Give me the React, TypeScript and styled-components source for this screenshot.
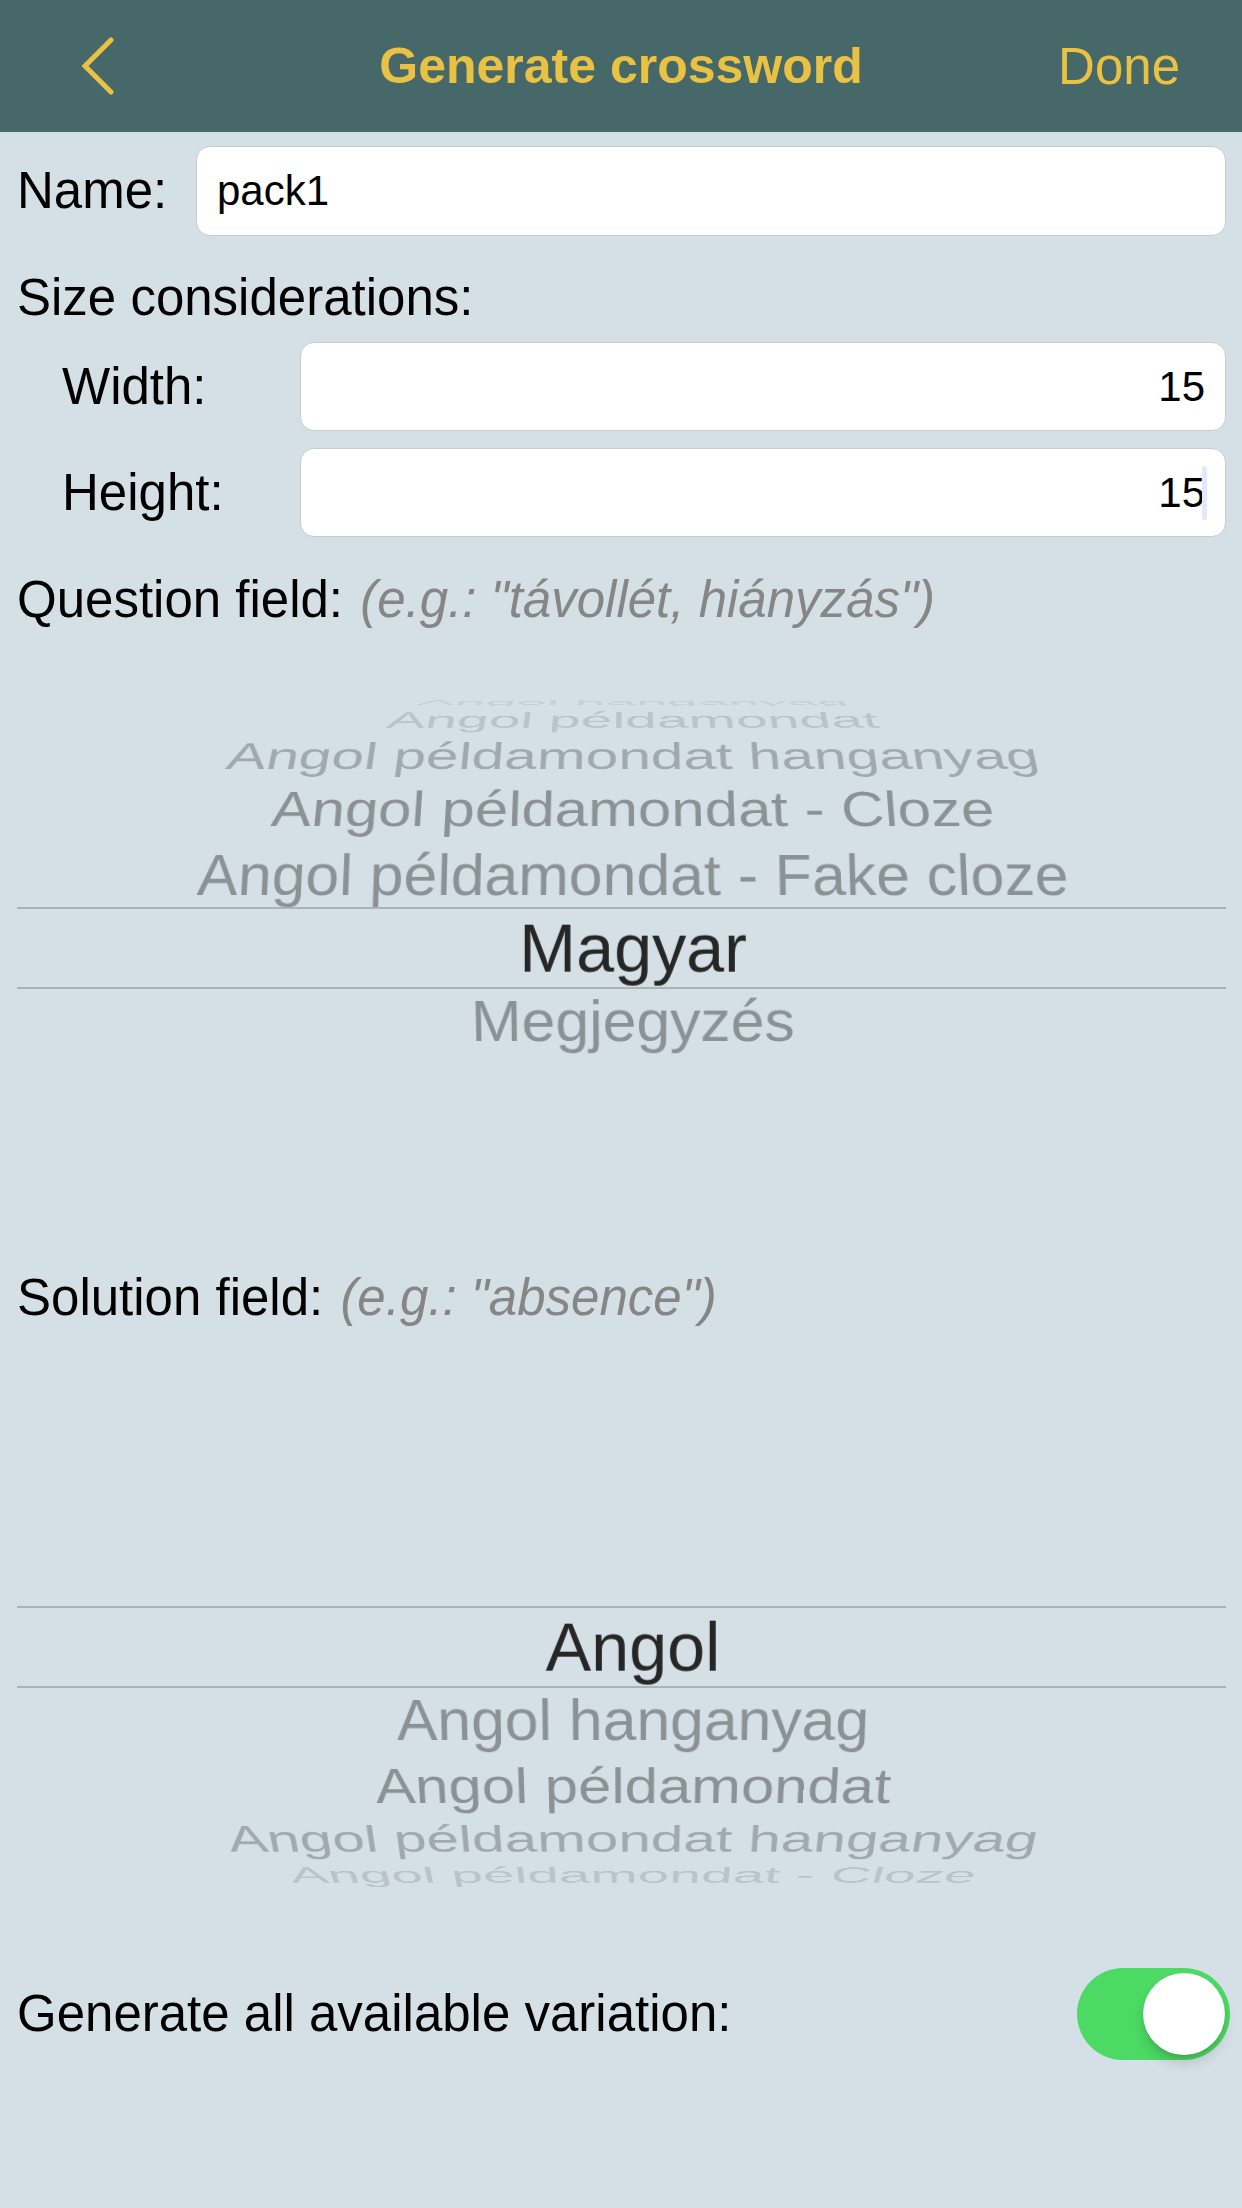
import React from "react";
import styled, { createGlobalStyle } from "styled-components";

const FONT = `"Liberation Sans", Arial, Helvetica, sans-serif`;

const GlobalStyle = createGlobalStyle`
  *, *::before, *::after { box-sizing: border-box; }
  html, body { margin: 0; padding: 0; background: #d5e0e6; }
  body { font-family: ${FONT}; }
`;

const Screen = styled.div`
  width: 1242px;
  height: 2208px;
  overflow: hidden;
  background: #d5e0e6;
  display: flex;
  flex-direction: column;
  font-family: ${FONT};
  color: #000;
`;

const NavBar = styled.header`
  flex: 0 0 132px;
  height: 132px;
  background: #466868;
  display: grid;
  grid-template-columns: 1fr auto 1fr;
  align-items: center;
  padding: 0 62px;
  color: #e9c244;
`;

const BackButton = styled.button`
  justify-self: start;
  display: flex;
  align-items: center;
  background: none;
  border: 0;
  padding: 0;
  margin: 0 0 0 18px;
  color: inherit;
  cursor: pointer;
`;

const NavTitle = styled.h1`
  margin: 0;
  font-size: 50px;
  font-weight: 700;
  color: inherit;
  white-space: nowrap;
`;

const NavAction = styled.button`
  justify-self: end;
  background: none;
  border: 0;
  padding: 0;
  font-family: inherit;
  font-size: 51px;
  color: inherit;
  cursor: pointer;
`;

const Form = styled.main`
  display: flex;
  flex-direction: column;
  padding: 0 16px 0 17px;
`;

const FieldRow = styled.div<{ $top: number; $indent?: number }>`
  display: flex;
  align-items: center;
  margin-top: ${(p) => p.$top}px;
  padding-left: ${(p) => p.$indent ?? 0}px;
`;

const FieldLabel = styled.label<{ $width: number }>`
  flex: 0 0 ${(p) => p.$width}px;
  font-size: 51px;
  line-height: 60px;
  white-space: nowrap;
`;

const TextBox = styled.div<{ $align: "left" | "right"; $height: number; $padRight?: number }>`
  flex: 1;
  height: ${(p) => p.$height}px;
  background: #fff;
  border: 1.5px solid #c6cdd2;
  border-radius: 14px;
  display: flex;
  align-items: center;
  justify-content: ${(p) => (p.$align === "right" ? "flex-end" : "flex-start")};
  padding: 0 ${(p) => p.$padRight ?? 20}px 0 20px;
  font-size: 42px;
  color: #000;
`;

const Caret = styled.span`
  display: inline-block;
  width: 5px;
  height: 54px;
  border-radius: 3px;
  background: #e3e8fb;
  margin-left: -3px;
`;

const SectionLabel = styled.div<{ $top: number }>`
  margin-top: ${(p) => p.$top}px;
  height: 60px;
  font-size: 51px;
  line-height: 60px;
  white-space: nowrap;
`;

const Hint = styled.span`
  font-style: italic;
  color: #868686;
  margin-left: 3px;
`;

const PickerFrame = styled.div<{ $top: number; $height: number }>`
  position: relative;
  margin-top: ${(p) => p.$top}px;
  height: ${(p) => p.$height}px;
  overflow: hidden;
`;

const GreyLayer = styled.div`
  position: absolute;
  left: 0;
  right: 0;
  top: 0;
  height: 620px;
  -webkit-mask-image: linear-gradient(to bottom, #000 0, #000 270px, transparent 270px, transparent 350px, #000 350px);
  mask-image: linear-gradient(to bottom, #000 0, #000 270px, transparent 270px, transparent 350px, #000 350px);
`;

const FocusLayer = styled.div`
  position: absolute;
  left: 0;
  right: 0;
  top: 0;
  height: 620px;
  clip-path: inset(271px 0 271px 0);
`;

const Magnifier = styled.div`
  position: absolute;
  left: 23px;
  right: 0;
  top: 0;
  bottom: 0;
  transform: scale(1.12);
  transform-origin: 50% 310px;
`;

const Drum = styled.div<{ $inset: number }>`
  position: absolute;
  left: ${(p) => p.$inset}px;
  right: 0;
  top: 0;
  bottom: 0;
  perspective: 2000px;
  perspective-origin: 50% 310px;
`;

const DrumRow = styled.div<{ $focus?: boolean }>`
  position: absolute;
  left: 0;
  right: 0;
  top: 274px;
  height: 72px;
  line-height: 72px;
  text-align: center;
  white-space: nowrap;
  font-size: 61px;
  color: ${(p) => (p.$focus ? "#262626" : "#8a9296")};
  backface-visibility: hidden;
`;

const SelectionBand = styled.div`
  position: absolute;
  left: 0;
  right: 0;
  top: 269px;
  height: 82px;
  border-top: 2px solid #a9b3b8;
  border-bottom: 2px solid #a9b3b8;
  pointer-events: none;
`;

const ToggleRow = styled.div<{ $top: number }>`
  display: flex;
  align-items: center;
  justify-content: space-between;
  margin-top: ${(p) => p.$top}px;
  margin-right: -4px;
`;

const ToggleLabel = styled.span`
  font-size: 51px;
  line-height: 60px;
`;

const Switch = styled.button<{ $on: boolean }>`
  position: relative;
  width: 153px;
  height: 92px;
  border-radius: 46px;
  border: 0;
  padding: 0;
  background: ${(p) => (p.$on ? "#4cd964" : "#e5e5ea")};
  cursor: pointer;
`;

const Knob = styled.span<{ $on: boolean }>`
  position: absolute;
  top: 5px;
  left: ${(p) => (p.$on ? 66 : 6)}px;
  width: 82px;
  height: 82px;
  border-radius: 50%;
  background: #fff;
  box-shadow: 0 9px 12px rgba(0, 0, 0, 0.12), 0 3px 3px rgba(0, 0, 0, 0.08), 0 0 1px rgba(0, 0, 0, 0.08);
`;

const FIELDS = [
  "Angol",
  "Angol hanganyag",
  "Angol példamondat",
  "Angol példamondat hanganyag",
  "Angol példamondat - Cloze",
  "Angol példamondat - Fake cloze",
  "Magyar",
  "Megjegyzés",
];

const STEP = 15.2;
const RADIUS = 280;
const FADE = [1, 1, 1, 0.71, 0.38, 0.22];

function DrumRows({ items, selected, focus }: { items: string[]; selected: number; focus?: boolean }) {
  return (
    <>
      {items.map((label, i) => {
        const k = i - selected;
        const a = k * STEP;
        if (Math.abs(a) >= 90) return null;
        return (
          <DrumRow
            key={label}
            $focus={focus}
            style={{
              transform: `translateZ(-${RADIUS}px) rotateX(${-a}deg) translateZ(${RADIUS}px)`,
              opacity: focus ? 1 : FADE[Math.abs(k)] ?? 0.2,
            }}
          >
            {label}
          </DrumRow>
        );
      })}
    </>
  );
}

function WheelPicker({ items, selected, top, height }: { items: string[]; selected: number; top: number; height: number }) {
  return (
    <PickerFrame $top={top} $height={height}>
      <GreyLayer>
        <Drum $inset={23}>
          <DrumRows items={items} selected={selected} />
        </Drum>
      </GreyLayer>
      <FocusLayer>
        <Magnifier>
          <Drum $inset={0}>
            <DrumRows items={items} selected={selected} focus />
          </Drum>
        </Magnifier>
      </FocusLayer>
      <SelectionBand />
    </PickerFrame>
  );
}

function Chevron() {
  return (
    <svg width="36" height="58" viewBox="0 0 36 58" fill="none">
      <polyline points="31,3 5,29 31,55" stroke="currentColor" strokeWidth="5" strokeLinecap="round" strokeLinejoin="miter" />
    </svg>
  );
}

export default function App() {
  return (
    <>
      <GlobalStyle />
      <Screen>
        <NavBar>
          <BackButton aria-label="Back">
            <Chevron />
          </BackButton>
          <NavTitle>Generate crossword</NavTitle>
          <NavAction>Done</NavAction>
        </NavBar>
        <Form>
          <FieldRow $top={14}>
            <FieldLabel $width={179}>Name:</FieldLabel>
            <TextBox $align="left" $height={90}>pack1</TextBox>
          </FieldRow>
          <SectionLabel $top={32}>Size considerations:</SectionLabel>
          <FieldRow $top={14} $indent={45}>
            <FieldLabel $width={238}>Width:</FieldLabel>
            <TextBox $align="right" $height={89} $padRight={20}>15</TextBox>
          </FieldRow>
          <FieldRow $top={17} $indent={45}>
            <FieldLabel $width={238}>Height:</FieldLabel>
            <TextBox $align="right" $height={89} $padRight={18}>
              15
              <Caret />
            </TextBox>
          </FieldRow>
          <SectionLabel $top={33}>
            Question field: <Hint>(e.g.: "távollét, hiányzás")</Hint>
          </SectionLabel>
          <WheelPicker items={FIELDS} selected={6} top={8} height={620} />
          <SectionLabel $top={10}>
            Solution field: <Hint>(e.g.: "absence")</Hint>
          </SectionLabel>
          <WheelPicker items={FIELDS} selected={0} top={9} height={552} />
          <ToggleRow $top={79}>
            <ToggleLabel>Generate all available variation:</ToggleLabel>
            <Switch $on aria-label="Generate all available variation">
              <Knob $on />
            </Switch>
          </ToggleRow>
        </Form>
      </Screen>
    </>
  );
}
